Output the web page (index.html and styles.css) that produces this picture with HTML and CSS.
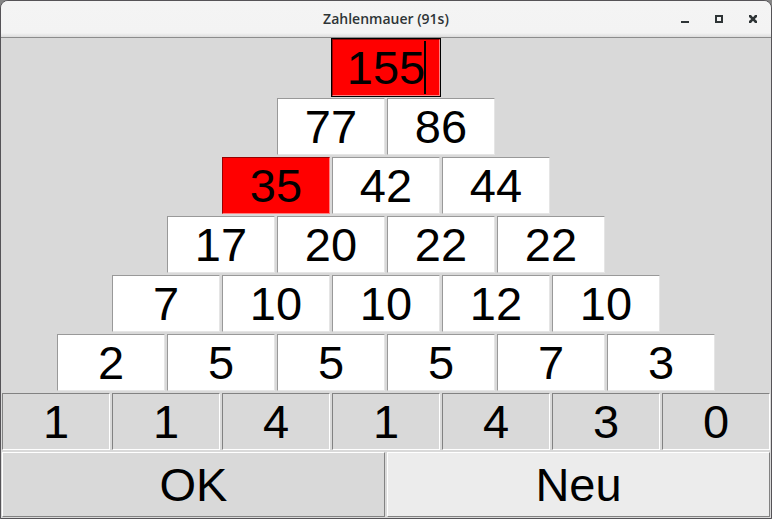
FILE: index.html
```html
<!DOCTYPE html>
<html lang="de">
<head>
<meta charset="utf-8">
<title>Zahlenmauer (91s)</title>
<link rel="stylesheet" href="styles.css">
</head>
<body>
<div class="window">
  <header class="titlebar">
    <h1 class="title">Zahlenmauer (91s)</h1>
    <div class="controls">
      <button class="control" type="button" aria-label="Minimieren"><svg width="10" height="10" viewBox="0 0 10 10"><path d="M1 7h8v2H1z"/></svg></button>
      <button class="control" type="button" aria-label="Maximieren"><svg width="10" height="10" viewBox="0 0 10 10"><path fill-rule="evenodd" d="M1 1h8v8H1zM3 3v4h4V3z"/></svg></button>
      <button class="control" type="button" aria-label="Schließen"><svg width="10" height="10" viewBox="0 0 10 10"><path d="M1 1h2L5 3.200 7 1h2v2L6.800 5 9 7v2H7L5 6.800 3 9H1V7L3.200 5 1 3z"/></svg></button>
    </div>
  </header>
  <form class="game">
    <div class="row">
      <div class="brick focused"><input class="wrong" aria-label="Reihe 1, Stein 1" value="155"><span class="caret"></span></div>
    </div>
    <div class="row">
      <div class="brick"><input aria-label="Reihe 2, Stein 1" value="77"></div>
      <div class="brick"><input aria-label="Reihe 2, Stein 2" value="86"></div>
    </div>
    <div class="row">
      <div class="brick"><input class="wrong" aria-label="Reihe 3, Stein 1" value="35"></div>
      <div class="brick"><input aria-label="Reihe 3, Stein 2" value="42"></div>
      <div class="brick"><input aria-label="Reihe 3, Stein 3" value="44"></div>
    </div>
    <div class="row">
      <div class="brick"><input aria-label="Reihe 4, Stein 1" value="17"></div>
      <div class="brick"><input aria-label="Reihe 4, Stein 2" value="20"></div>
      <div class="brick"><input aria-label="Reihe 4, Stein 3" value="22"></div>
      <div class="brick"><input aria-label="Reihe 4, Stein 4" value="22"></div>
    </div>
    <div class="row">
      <div class="brick"><input aria-label="Reihe 5, Stein 1" value="7"></div>
      <div class="brick"><input aria-label="Reihe 5, Stein 2" value="10"></div>
      <div class="brick"><input aria-label="Reihe 5, Stein 3" value="10"></div>
      <div class="brick"><input aria-label="Reihe 5, Stein 4" value="12"></div>
      <div class="brick"><input aria-label="Reihe 5, Stein 5" value="10"></div>
    </div>
    <div class="row">
      <div class="brick"><input aria-label="Reihe 6, Stein 1" value="2"></div>
      <div class="brick"><input aria-label="Reihe 6, Stein 2" value="5"></div>
      <div class="brick"><input aria-label="Reihe 6, Stein 3" value="5"></div>
      <div class="brick"><input aria-label="Reihe 6, Stein 4" value="5"></div>
      <div class="brick"><input aria-label="Reihe 6, Stein 5" value="7"></div>
      <div class="brick"><input aria-label="Reihe 6, Stein 6" value="3"></div>
    </div>
    <div class="row">
      <div class="brick"><input readonly aria-label="Reihe 7, Stein 1" value="1"></div>
      <div class="brick"><input readonly aria-label="Reihe 7, Stein 2" value="1"></div>
      <div class="brick"><input readonly aria-label="Reihe 7, Stein 3" value="4"></div>
      <div class="brick"><input readonly aria-label="Reihe 7, Stein 4" value="1"></div>
      <div class="brick"><input readonly aria-label="Reihe 7, Stein 5" value="4"></div>
      <div class="brick"><input readonly aria-label="Reihe 7, Stein 6" value="3"></div>
      <div class="brick"><input readonly aria-label="Reihe 7, Stein 7" value="0"></div>
    </div>
    <div class="actions">
      <button class="action" type="button">OK</button>
      <button class="action active" type="button">Neu</button>
    </div>
  </form>
</div>
</body>
</html>
```
FILE: styles.css
```css
* {
  box-sizing: border-box;
}

body {
  margin: 0;
  background: #858585;
}

.window {
  border: 1px solid #555357;
  border-radius: 8px 8px 0 0;
  background: #d9d9d9;
  overflow: hidden;
}

.titlebar {
  display: grid;
  grid-template-columns: 1fr auto 1fr;
  align-items: center;
  height: 37px;
  border-bottom: 1px solid #8c8c8c;
  background: linear-gradient(#f4f4f4, #f3f3f3 32px, #dcdcdc);
  color: #2e3436;
}

.title {
  grid-column: 2;
  margin: 0;
  font: 600 14px/20px "Open Sans", sans-serif;
}

.controls {
  display: flex;
  justify-content: flex-end;
  gap: 4px;
  padding-right: 3px;
}

.control {
  display: flex;
  align-items: center;
  justify-content: center;
  width: 30px;
  height: 30px;
  padding: 0;
  border: 0;
  background: none;
  color: inherit;
}

.control svg {
  fill: currentColor;
}

.row {
  display: flex;
  justify-content: center;
}

.brick {
  position: relative;
  width: calc(100% / 7);
  height: 59px;
  padding: 1px;
}

.brick input {
  display: block;
  width: 100%;
  height: 100%;
  padding: 0;
  border: 1px solid;
  border-color: #999 #e5e5e5 #e5e5e5 #999;
  border-radius: 0;
  outline: 0;
  background: #fff;
  color: #000;
  font: 47px "Liberation Sans", Arial, sans-serif;
  text-align: center;
}

.brick input.wrong {
  border-color: #990000 #ff7f7f #ff7f7f #990000;
  background: #f00;
}

.brick input[readonly] {
  border-color: #828282 #fff #fff #828282;
  background: #d9d9d9;
}

.focused {
  background: #000;
}

.caret {
  position: absolute;
  top: 3px;
  bottom: 3px;
  left: calc(50% + 38px);
  width: 2px;
  background: #000;
}

.actions {
  display: grid;
  grid-template-columns: 1fr 1fr;
}

.action {
  height: 65px;
  margin: 1px;
  padding: 0;
  border: 1px solid;
  border-color: #fff #828282 #828282 #fff;
  background: #d9d9d9;
  color: #000;
  font: 47px "Liberation Sans", Arial, sans-serif;
}

.action.active {
  background: #ececec;
}
```
